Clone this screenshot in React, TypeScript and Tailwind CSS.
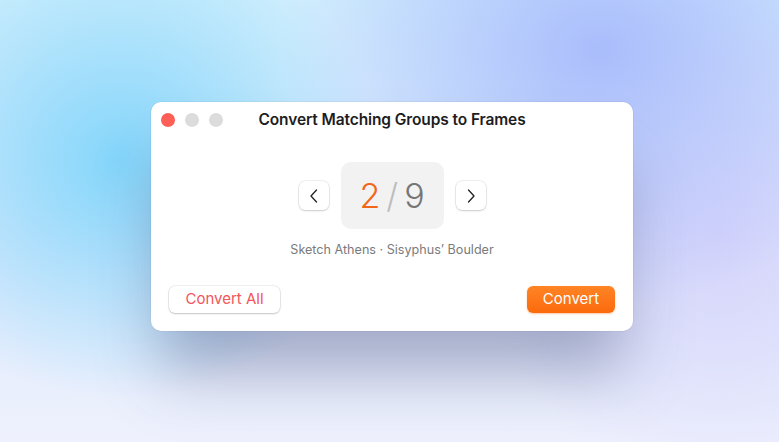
import React from "react";

function Chevron({ dir }: { dir: "left" | "right" }) {
  return (
    <svg width="10" height="14" viewBox="0 0 10 14" fill="none">
      <path
        d={dir === "left" ? "M7.5 1L2 7l5.5 6" : "M2.5 1L8 7l-5.5 6"}
        stroke="#222"
        strokeWidth="1.3"
        strokeLinecap="round"
        strokeLinejoin="round"
      />
    </svg>
  );
}

function NavButton({ dir }: { dir: "left" | "right" }) {
  return (
    <button className="flex h-[29px] w-[30px] items-center justify-center rounded-[6px] bg-white shadow-[0_0_0_0.5px_rgba(0,0,0,0.12),0_1px_2px_rgba(0,0,0,0.15)]">
      <Chevron dir={dir} />
    </button>
  );
}

export default function App() {
  return (
    <div
      className="flex h-[442px] w-[779px] justify-center overflow-hidden bg-[radial-gradient(ellipse_260px_240px_at_120px_160px,#84d6fb,transparent),radial-gradient(ellipse_320px_260px_at_600px_50px,#aabdfc,transparent),radial-gradient(ellipse_240px_260px_at_720px_230px,#d6d4fb,transparent),linear-gradient(180deg,#d2effd_0%,#dfeafc_55%,#eef1fd_100%)] pt-[102px]"
      style={{ fontFamily: "Inter, 'Noto Sans', sans-serif" }}
    >
      <div className="ml-[5px] flex h-[229px] w-[482px] flex-col rounded-[10px] bg-white shadow-[0_50px_60px_-10px_rgba(60,70,120,0.4),0_0_0_0.5px_rgba(0,0,0,0.08)]">
        <div className="grid h-[34px] grid-cols-[1fr_auto_1fr] items-center px-[10px] pt-[1px]">
          <div className="flex items-center gap-[10px]">
            <span className="h-[14px] w-[14px] rounded-full bg-[#fe5f57]" />
            <span className="h-[14px] w-[14px] rounded-full bg-[#dcdcdc]" />
            <span className="h-[14px] w-[14px] rounded-full bg-[#dcdcdc]" />
          </div>
          <div className="text-[15.5px] font-semibold tracking-[-0.1px] text-[#1d1d1f]">
            Convert Matching Groups to Frames
          </div>
          <div />
        </div>

        <div className="mt-[26px] flex items-center justify-center gap-[12px]">
          <NavButton dir="left" />
          <div className="flex h-[67px] w-[103px] items-center justify-center rounded-[10px] bg-[#f2f2f2] text-[34px] font-light leading-none">
            <span className="text-[#f2661a]">2</span>
            <span className="mx-[6px] text-[#bdbdbd]">/</span>
            <span className="text-[#767676]">9</span>
          </div>
          <NavButton dir="right" />
        </div>

        <div className="mt-[12px] text-center text-[12.6px] text-[#7b7b7b]">
          Sketch Athens · Sisyphus’ Boulder
        </div>

        <div className="mt-auto flex items-center justify-between px-[18px] pb-[18px]">
          <button className="h-[27px] w-[111px] rounded-[6px] bg-white text-[15px] text-[#f2555a] shadow-[0_0_0_0.5px_rgba(0,0,0,0.12),0_1px_2px_rgba(0,0,0,0.18)]">
            Convert All
          </button>
          <button className="h-[27px] w-[88px] rounded-[6px] bg-gradient-to-b from-[#ff8424] to-[#fb6a0b] text-[15px] text-white shadow-[0_1px_2px_rgba(240,100,10,0.35)]">
            Convert
          </button>
        </div>
      </div>
    </div>
  );
}
